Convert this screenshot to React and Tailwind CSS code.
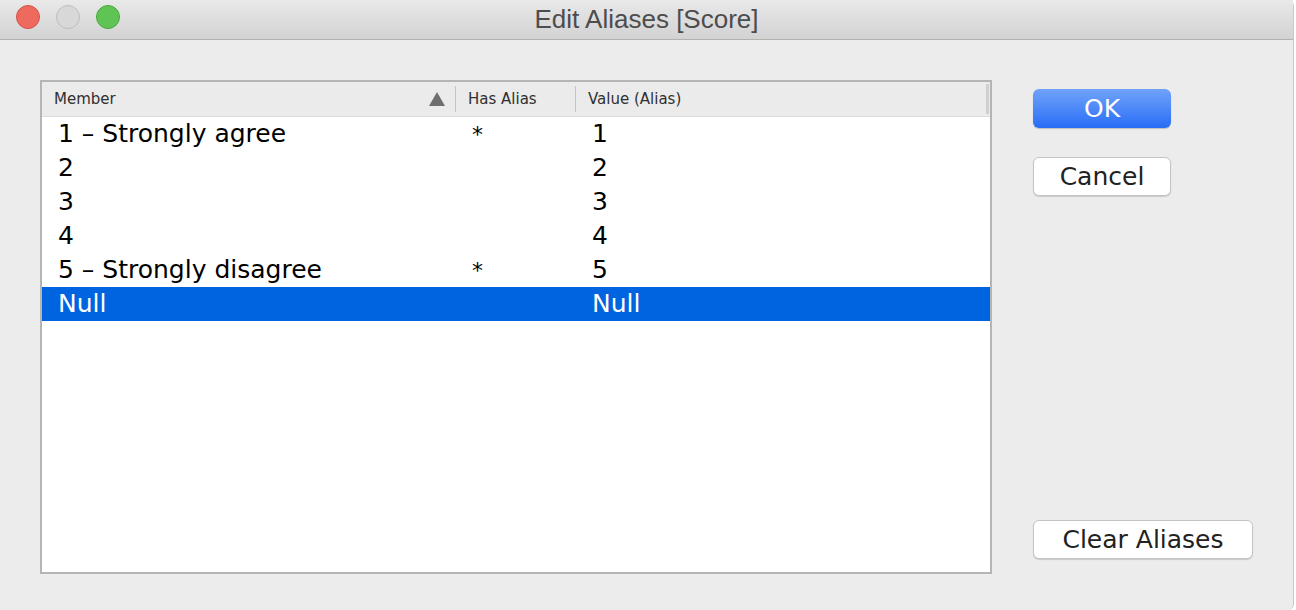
import React from "react";

const rows = [
  { m: "1 – Strongly agree", a: "*", v: "1" },
  { m: "2", a: "", v: "2" },
  { m: "3", a: "", v: "3" },
  { m: "4", a: "", v: "4" },
  { m: "5 – Strongly disagree", a: "*", v: "5" },
  { m: "Null", a: "", v: "Null", sel: true },
];

const ui = { fontFamily: '"DejaVu Sans", "Noto Sans", sans-serif' };

export default function App() {
  return (
    <div className="w-[1296px] h-[610px] bg-white overflow-hidden">
      <div className="w-[1294px] h-[610px] bg-[#ececec] rounded-tr-[6px] rounded-br-[6px] border-r border-[#c8c8c8] flex flex-col">
        {/* title bar */}
        <div className="h-[40px] shrink-0 bg-gradient-to-b from-[#e9e9e9] to-[#d2d2d2] border-b border-[#b2b2b2] relative flex items-center justify-center">
          <div className="absolute left-[16px] top-[5px] flex gap-[16px]">
            <div className="w-[24px] h-[24px] rounded-full bg-[#ee6a5f] border border-[#d65249]" />
            <div className="w-[24px] h-[24px] rounded-full bg-[#d8d8d8] border border-[#bdbdbd]" />
            <div className="w-[24px] h-[24px] rounded-full bg-[#5fc454] border border-[#4aa73e]" />
          </div>
          <span className="text-[26px] leading-none text-[#4d4d4d] -mt-[1px]" style={{ fontFamily: '"Liberation Sans", sans-serif' }}>
            Edit Aliases [Score]
          </span>
        </div>

        {/* body */}
        <div className="flex flex-1 pt-[40px] pl-[40px]">
          {/* table */}
          <div className="w-[952px] h-[494px] border-2 border-[#b5b5b5] bg-white flex flex-col" style={ui}>
            <div className="h-[35px] shrink-0 bg-[#ebebeb] border-b border-[#dcdcdc] flex items-center text-[15px] text-[#303030]">
              <div className="w-[413px] pl-[12px] flex items-center justify-between pr-[10px]">
                <span>Member</span>
                <svg width="16" height="14" viewBox="0 0 16 14">
                  <path d="M8 0 L16 14 L0 14 Z" fill="#6e6e6e" />
                </svg>
              </div>
              <div className="w-[1px] h-[26px] bg-[#c4c4c4]" />
              <div className="w-[119px] pl-[12px]">Has Alias</div>
              <div className="w-[1px] h-[26px] bg-[#c4c4c4]" />
              <div className="flex-1 pl-[12px]">Value (Alias)</div>
              <div className="w-[3px] h-[30px] bg-[#d0d0d0] mr-[1px]" />
            </div>
            {rows.map((r, i) => (
              <div
                key={i}
                className={`h-[34px] flex items-center text-[25px] ${r.sel ? "bg-[#0064e1] text-white" : "text-black"}`}
              >
                <div className="w-[414px] pl-[16px] whitespace-nowrap">{r.m}</div>
                <div className="w-[120px] pl-[16px] text-[22px]">{r.a}</div>
                <div className="flex-1 pl-[16px]">{r.v}</div>
              </div>
            ))}
          </div>

          {/* buttons */}
          <div className="flex flex-col pl-[41px] pt-[9px] pb-[51px]" style={ui}>
            <button className="w-[138px] h-[39px] rounded-[6px] bg-gradient-to-b from-[#70a2f8] to-[#276cf6] text-white text-[25px] leading-none shadow-[0_1px_1px_rgba(0,0,0,0.2)]">
              OK
            </button>
            <button className="mt-[29px] w-[138px] h-[39px] rounded-[6px] bg-white border border-[#c4c4c4] text-[#222] text-[25px] leading-none shadow-[0_1px_1px_rgba(0,0,0,0.15)]">
              Cancel
            </button>
            <div className="flex-1" />
            <button className="w-[220px] h-[39px] rounded-[6px] bg-white border border-[#c4c4c4] text-[#222] text-[25px] leading-none shadow-[0_1px_1px_rgba(0,0,0,0.15)]">
              Clear Aliases
            </button>
          </div>
        </div>
      </div>
    </div>
  );
}
